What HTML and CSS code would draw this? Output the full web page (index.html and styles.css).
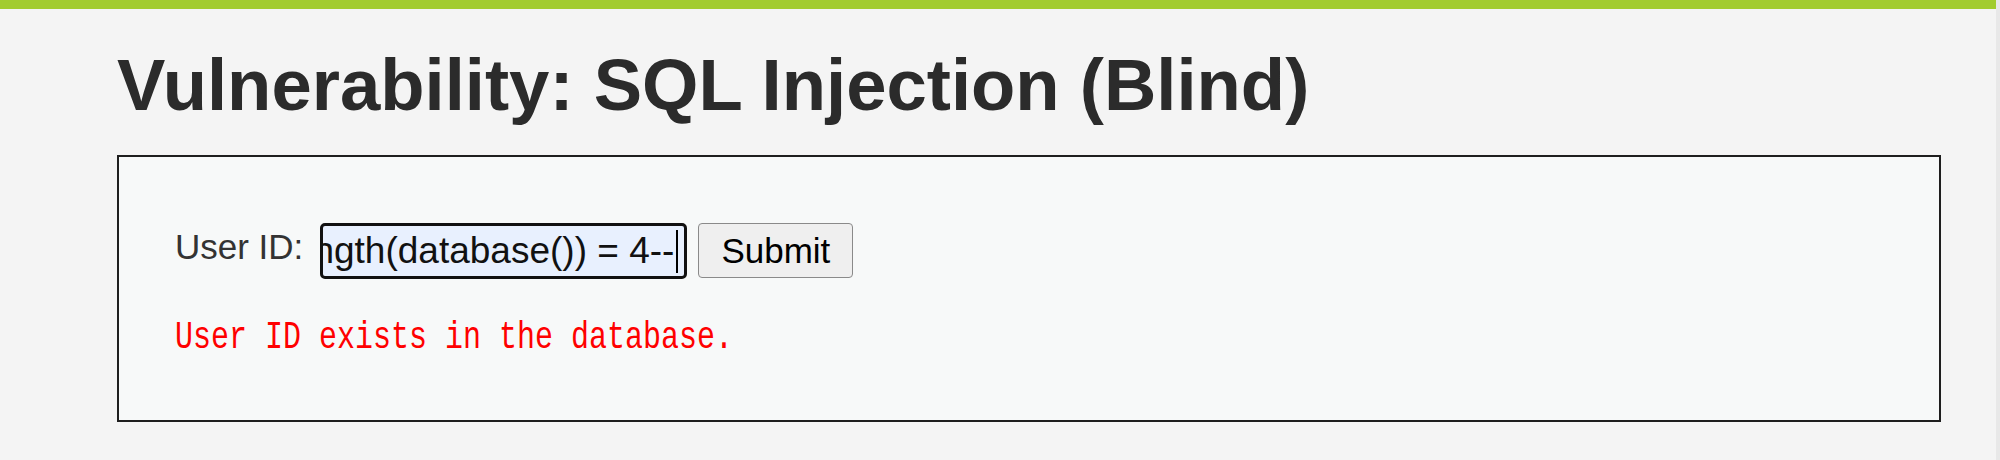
FILE: index.html
```html
<!DOCTYPE html>
<html lang="en">
<head>
<meta charset="utf-8">
<title>Vulnerability: SQL Injection (Blind)</title>
<link rel="stylesheet" href="styles.css">
</head>
<body>
<div class="topbar"></div>
<div class="main">
  <h1 class="title">Vulnerability: SQL Injection (Blind)</h1>
  <div class="vuln-area">
    <form class="form-row">
      <label class="label">User ID:</label>
      <div class="input"><span class="input-text">ngth(database()) = 4--</span><span class="caret"></span></div>
      <button class="submit" type="button">Submit</button>
    </form>
    <pre class="result">User ID exists in the database.</pre>
  </div>
</div>
</body>
</html>
```
FILE: styles.css
```css
html {
  background: #e8e8e8;
}
body {
  margin: 0 4px 0 0;
  background: #f4f4f4;
  min-height: 460px;
  font-family: "Liberation Sans", Arial, sans-serif;
}
.topbar {
  height: 9px;
  background: #a2cc2f;
}
.main {
  padding: 34px 55px 0 117px;
}
.title {
  margin: 0 0 28px;
  font-size: 72.5px;
  line-height: 84px;
  font-weight: 700;
  color: #2b2b2b;
}
.vuln-area {
  border: 2px solid #1e1e1e;
  background: #f7f9f9;
  padding: 66px 56px 67px;
}
.form-row {
  display: flex;
  align-items: flex-start;
  margin: 0;
}
.label {
  font-size: 35px;
  line-height: 40px;
  padding-top: 4px;
  color: #333;
  margin-right: 17px;
}
.input {
  box-sizing: border-box;
  width: 367px;
  height: 56px;
  border: 3px solid #111;
  border-radius: 5px;
  background: #e8f0fe;
  display: flex;
  align-items: center;
  justify-content: flex-end;
  overflow: hidden;
  white-space: nowrap;
  padding-right: 6px;
  font-size: 37px;
  color: #111;
}
.input-text {
  flex: none;
}
.caret {
  flex: none;
  width: 2px;
  height: 43px;
  background: #000;
  margin-left: 2px;
}
.submit {
  margin-left: 11px;
  box-sizing: border-box;
  width: 155px;
  height: 55px;
  border: 1.5px solid #8a8a8a;
  border-radius: 4px;
  background: #efefef;
  font: 35px "Liberation Sans", Arial, sans-serif;
  color: #000;
  padding: 0;
}
.result {
  margin: 44px 0 0;
  font: 30px/30px "Liberation Mono", monospace;
  color: #f00;
  transform: scaleY(1.29);
  transform-origin: 50% 50%;
}
```
